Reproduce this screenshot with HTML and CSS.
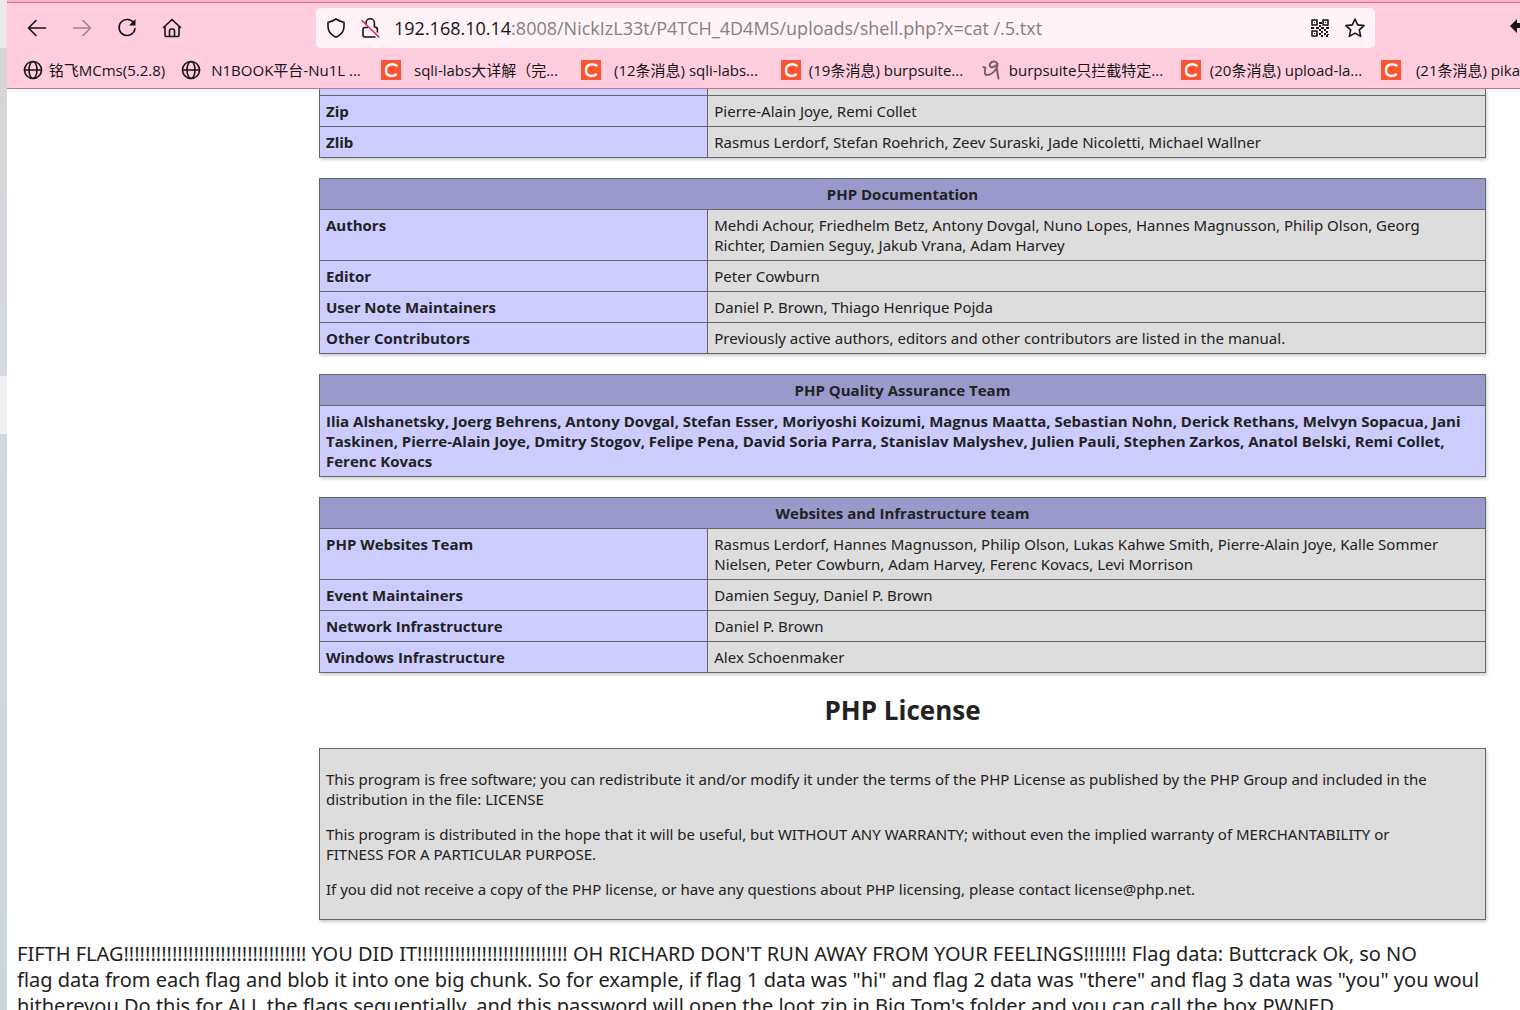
FILE: index.html
```html
<!DOCTYPE html>
<html lang="en">
<head>
<meta charset="utf-8">
<title>phpinfo()</title>
<link rel="stylesheet" href="styles.css">
</head>
<body>
<div class="desktop"></div>
<div class="window">
  <header class="chrome">
    <nav class="toolbar" aria-label="Navigation">
      <div class="nav-buttons">
        <button class="tool" type="button" aria-label="Back"><svg viewBox="0 0 20 20"><path d="M18.5 10H1.5M9 2.500 1.500 10 9 17.500"/></svg></button>
        <button class="tool off" type="button" aria-label="Forward"><svg viewBox="0 0 20 20"><path d="M1.500 10H18.500M11 2.500 18.500 10 11 17.500"/></svg></button>
        <button class="tool" type="button" aria-label="Reload"><svg viewBox="0 0 20 20"><path d="M17 5.500A8 8 0 1 0 18 10.500"/><path class="solid" d="M18.500 1v6.500H12z"/></svg></button>
        <button class="tool" type="button" aria-label="Home"><svg viewBox="0 0 20 20"><path d="M1.500 9.500 10 1.500l8.500 8M3 8.500V17.500q0 1 1 1H16q1 0 1-1V8.500M7.500 18.500V13q0-2 2-2h1q2 0 2 2v5.500"/></svg></button>
      </div>
      <div class="address">
        <svg class="icon" viewBox="0 0 20 20"><path d="M10 1Q14 3.700 18 4.200V8.500C18 14 15 17 10 19.200 5 17 2 14 2 8.500V4.200Q6 3.700 10 1z"/></svg>
        <svg class="icon" viewBox="0 0 20 20"><path d="M6 6V5a4.200 4.200 0 0 1 8.400 0V9q3 0 3 2.500V14M7.500 9.500H5q-2 0-2 2V17q0 2 2 2H15"/><path class="slash" d="M2 2.500 19 19"/></svg>
        <div class="url" role="textbox" aria-label="Address"><b>192.168.10.14</b>:8008/NickIzL33t/P4TCH_4D4MS/uploads/shell.php?x=cat /.5.txt</div>
        <button class="tool" type="button" aria-label="QR code"><svg class="qr" viewBox="0 -1 20 20"><path d="M1 1h5v5H1zM12 1h5v5h-5zM1 12h5v5H1z"/><path class="solid" d="M3 3h1v1H3zM14 3h1v1h-1zM3 14h1v1H3zM8 3h3v2H8zM8 6h2v2H8zM0 8h3v2H0zM5 8h3v2H5zM10 8h3v2h-3zM15 8h3v2h-3zM8 10h2v2H8zM13 10h2v2h-2zM10 12h2v2h-2zM15 12h2v2h-2zM8 14h2v2H8zM13 14h2v2h-2zM16 15h2v1h-2zM10 16h2v2h-2zM15 16h2v2h-2z"/></svg></button>
        <button class="tool" type="button" aria-label="Bookmark this page"><svg viewBox="0 0 20 20"><path d="M10 1l2.700 5.900 6.400.7-4.800 4.300 1.400 6.500L10 15.100l-5.700 3.300 1.400-6.500L.9 7.600l6.400-.7z"/></svg></button>
      </div>
      <button class="tool undo" type="button" aria-label="Undo"><svg viewBox="0 0 20 20"><path class="solid" d="M0 8 7 1v4h5q8 1 8 10-3-5-8-5H7v5z"/></svg></button>
    </nav>
    <nav class="bookmarks" aria-label="Bookmarks">
      <a class="mark short" href="#"><svg viewBox="0 0 20 20"><circle cx="10" cy="10" r="8.500"/><ellipse cx="10" cy="10" rx="4" ry="8.500"/><path d="M1.500 10h17"/></svg><span>铭飞MCms(5.2.8)</span></a>
      <a class="mark" href="#"><svg viewBox="0 0 20 20"><circle cx="10" cy="10" r="8.500"/><ellipse cx="10" cy="10" rx="4" ry="8.500"/><path d="M1.500 10h17"/></svg><span>N1BOOK平台-Nu1L ...</span></a>
      <a class="mark" href="#"><svg viewBox="0 0 20 20"><path class="tile" d="M0 0h20v20H0z"/><path class="cee" d="M15.500 5.500C12 3 5 4 5 10.500c0 6 6.500 6.500 10 4"/></svg><span>sqli-labs大详解（完...</span></a>
      <a class="mark" href="#"><svg viewBox="0 0 20 20"><path class="tile" d="M0 0h20v20H0z"/><path class="cee" d="M15.500 5.500C12 3 5 4 5 10.500c0 6 6.500 6.500 10 4"/></svg><span>(12条消息) sqli-labs...</span></a>
      <a class="mark" href="#"><svg viewBox="0 0 20 20"><path class="tile" d="M0 0h20v20H0z"/><path class="cee" d="M15.500 5.500C12 3 5 4 5 10.500c0 6 6.500 6.500 10 4"/></svg><span>(19条消息) burpsuite...</span></a>
      <a class="mark" href="#"><svg viewBox="0 0 20 20"><path class="scribble" d="M2.500 7l2 1q-2 7 1.500 7 5 0 9-6c3-5 1-7.500-2-7.500-4 0-5.500 4.500-3 5.500 3 1 4-1 5.500-2 .5 5 1 9 2 13.500"/></svg><span>burpsuite只拦截特定...</span></a>
      <a class="mark" href="#"><svg viewBox="0 0 20 20"><path class="tile" d="M0 0h20v20H0z"/><path class="cee" d="M15.500 5.500C12 3 5 4 5 10.500c0 6 6.500 6.500 10 4"/></svg><span>(20条消息) upload-la...</span></a>
      <a class="mark last" href="#"><svg viewBox="0 0 20 20"><path class="tile" d="M0 0h20v20H0z"/><path class="cee" d="M15.500 5.500C12 3 5 4 5 10.500c0 6 6.500 6.500 10 4"/></svg><span>(21条消息) pika</span></a>
    </nav>
  </header>
  <main class="page">
    <div class="info">
      <table>
        <colgroup><col class="name"><col></colgroup>
        <tr class="cut"><td class="e"></td><td class="v"></td></tr>
        <tr><td class="e">Zip</td><td class="v">Pierre-Alain Joye, Remi Collet</td></tr>
        <tr><td class="e">Zlib</td><td class="v">Rasmus Lerdorf, Stefan Roehrich, Zeev Suraski, Jade Nicoletti, Michael Wallner</td></tr>
      </table>
      <table>
        <colgroup><col class="name"><col></colgroup>
        <tr><th colspan="2">PHP Documentation</th></tr>
        <tr><td class="e">Authors</td><td class="v">Mehdi Achour, Friedhelm Betz, Antony Dovgal, Nuno Lopes, Hannes Magnusson, Philip Olson, Georg<br>Richter, Damien Seguy, Jakub Vrana, Adam Harvey</td></tr>
        <tr><td class="e">Editor</td><td class="v">Peter Cowburn</td></tr>
        <tr><td class="e">User Note Maintainers</td><td class="v">Daniel P. Brown, Thiago Henrique Pojda</td></tr>
        <tr><td class="e">Other Contributors</td><td class="v">Previously active authors, editors and other contributors are listed in the manual.</td></tr>
      </table>
      <table>
        <tr><th>PHP Quality Assurance Team</th></tr>
        <tr><td class="e">Ilia Alshanetsky, Joerg Behrens, Antony Dovgal, Stefan Esser, Moriyoshi Koizumi, Magnus Maatta, Sebastian Nohn, Derick Rethans, Melvyn Sopacua, Jani<br>Taskinen, Pierre-Alain Joye, Dmitry Stogov, Felipe Pena, David Soria Parra, Stanislav Malyshev, Julien Pauli, Stephen Zarkos, Anatol Belski, Remi Collet,<br>Ferenc Kovacs</td></tr>
      </table>
      <table>
        <colgroup><col class="name"><col></colgroup>
        <tr><th colspan="2">Websites and Infrastructure team</th></tr>
        <tr><td class="e">PHP Websites Team</td><td class="v">Rasmus Lerdorf, Hannes Magnusson, Philip Olson, Lukas Kahwe Smith, Pierre-Alain Joye, Kalle Sommer<br>Nielsen, Peter Cowburn, Adam Harvey, Ferenc Kovacs, Levi Morrison</td></tr>
        <tr><td class="e">Event Maintainers</td><td class="v">Damien Seguy, Daniel P. Brown</td></tr>
        <tr><td class="e">Network Infrastructure</td><td class="v">Daniel P. Brown</td></tr>
        <tr><td class="e">Windows Infrastructure</td><td class="v">Alex Schoenmaker</td></tr>
      </table>
      <h2>PHP License</h2>
      <div class="license">
        <p>This program is free software; you can redistribute it and/or modify it under the terms of the PHP License as published by the PHP Group and included in the<br>distribution in the file: LICENSE</p>
        <p>This program is distributed in the hope that it will be useful, but WITHOUT ANY WARRANTY; without even the implied warranty of MERCHANTABILITY or<br>FITNESS FOR A PARTICULAR PURPOSE.</p>
        <p>If you did not receive a copy of the PHP license, or have any questions about PHP licensing, please contact license@php.net.</p>
      </div>
    </div>
    <div class="output">FIFTH FLAG!!!!!!!!!!!!!!!!!!!!!!!!!!!!!!!!!! YOU DID IT!!!!!!!!!!!!!!!!!!!!!!!!!!!! OH RICHARD DON'T RUN AWAY FROM YOUR FEELINGS!!!!!!!! Flag data: Buttcrack Ok, so NO<br>flag data from each flag and blob it into one big chunk. So for example, if flag 1 data was "hi" and flag 2 data was "there" and flag 3 data was "you" you woul<br>hithereyou Do this for ALL the flags sequentially, and this password will open the loot.zip in Big Tom's folder and you can call the box PWNED.</div>
  </main>
</div>
</body>
</html>
```

FILE: styles.css
```css
* { box-sizing: border-box; }
body {
  margin: 0;
  height: 100vh;
  display: flex;
  overflow: hidden;
  background: #fff;
  color: #222;
  font-family: "Open Sans", "Noto Sans CJK SC", sans-serif;
}
.desktop {
  flex: 0 0 7px;
  background: linear-gradient(#ebe8e6 0 48px, #d6d5d8 48px, #d4dae0 376px, #f0f1f3 376px 434px, #d2d9df 434px, #c9d7dd);
}
.window {
  flex: 1;
  min-width: 0;
  display: flex;
  flex-direction: column;
}

/* Browser chrome */
.chrome {
  flex: none;
  height: 89px;
  border-top: 2px solid #ffafc9;
  border-bottom: 1px solid #b37a8b;
  background: #ffcddd;
  overflow: hidden;
}
.toolbar {
  height: 51px;
  border-top: 1px solid #b37a8b;
  display: flex;
  align-items: center;
}
.nav-buttons {
  flex: 0 0 309px;
  display: flex;
  gap: 25px;
  padding-left: 20px;
}
button {
  padding: 0;
  border: 0;
  background: none;
}
svg {
  display: block;
  width: 20px;
  height: 20px;
  flex: none;
  fill: none;
  stroke: #151515;
  stroke-width: 1.6;
  stroke-linecap: round;
  stroke-linejoin: round;
}
svg .solid { fill: #151515; stroke: none; }
svg .slash { stroke: #e22850; }
svg .tile { fill: #fc5531; stroke: none; }
svg .cee { stroke: #fff; stroke-width: 2.4; }
svg .scribble { stroke: #75606b; stroke-width: 2; }
.off { opacity: .4; }
.address {
  flex: 1;
  min-width: 0;
  height: 40px;
  padding: 0 10px;
  border-radius: 5px;
  background: #fff3f7;
  display: flex;
  align-items: center;
  gap: 14px;
}
.url {
  flex: 1;
  font-size: 18px;
  line-height: 24px;
  color: #857f82;
  white-space: nowrap;
  overflow: hidden;
}
.url b { font-weight: 400; color: #15141a; }
.undo { margin: 0 -10px 0 135px; }
.bookmarks {
  display: flex;
  padding-left: 16px;
  height: 34px;
}
.mark {
  flex: 0 0 200px;
  display: flex;
  align-items: center;
  padding-right: 10px;
  font-size: 15px;
  line-height: 20px;
  color: #15141a;
  text-decoration: none;
  white-space: nowrap;
}
.mark.short { flex-basis: 158px; }
.mark.last { flex-basis: 139px; padding: 0; }
.mark span { flex: 1; text-align: center; }
.mark.last span { text-align: right; }

/* phpinfo page */
.page {
  flex: 1;
  min-height: 0;
  overflow: hidden;
  font-family: "Noto Sans", sans-serif;
}
.info {
  padding: 0 34px 0 312px;
  font-size: 15px;
  line-height: 20px;
  white-space: nowrap;
}
table {
  width: 100%;
  margin-bottom: 20px;
  border-collapse: collapse;
  table-layout: fixed;
  box-shadow: 1px 2px 3px #ccc;
}
th, td {
  padding: 5px 6px;
  border: 1px solid #666;
  vertical-align: top;
}
.name { width: 33.3%; }
th, .e, h2 {
  font-family: "Open Sans", sans-serif;
  font-weight: 700;
}
th { background: #9999cc; }
.e { background: #ccccff; }
.v { background: #ddd; }
.cut td { height: 6px; padding: 0; border-top: 0; }
h2 {
  margin: 0 0 20px;
  font-size: 26px;
  line-height: 35px;
  text-align: center;
}
.license {
  padding: 5px 6px;
  border: 1px solid #666;
  background: #ddd;
  box-shadow: 1px 2px 3px #ccc;
}
.license p { margin: 15px 0; }
.output {
  padding: 21px 0 0 10px;
  font-size: 20px;
  line-height: 26px;
  white-space: nowrap;
}
```
